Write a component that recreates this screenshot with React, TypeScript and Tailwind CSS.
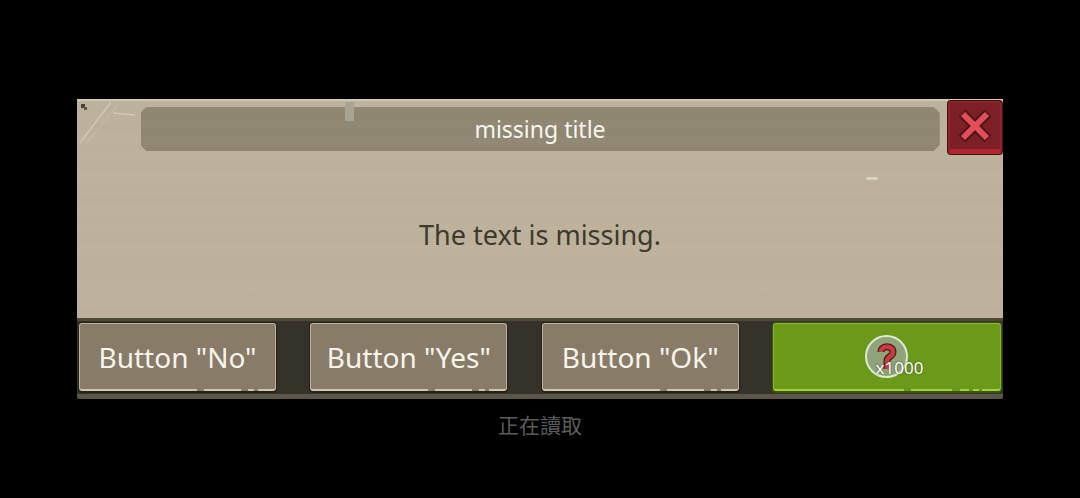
import React from 'react';

const font = { fontFamily: '"Noto Sans", "Noto Sans CJK TC", sans-serif' };

// little breaks in the bottom highlight of the buttons
function Gaps({ items, color }: { items: [number, number][]; color: string }) {
    return (
        <>
            {items.map(([left, width]) => (
                <i
                    key={left}
                    className="absolute bottom-[2px] h-[2px]"
                    style={{ left, width, backgroundColor: color }}
                />
            ))}
        </>
    );
}

function GameButton({ label }: { label: string }) {
    return (
        <button className="relative h-[71px] w-[199px] rounded-[4px] bg-[#26221a] pb-[2px] pt-px px-px">
            <span className="flex h-full w-full items-center justify-center rounded-[3px] border border-[#bdb29c] border-b-2 border-b-[#cfc4ae] bg-[#887c68] text-[28px] text-[#f7f4ec]">
                {label}
            </span>
            <Gaps items={[[119, 7], [163, 7], [176, 4]]} color="#887c68" />
        </button>
    );
}

function CostButton() {
    return (
        <button className="relative h-[71px] w-[230px] rounded-[4px] bg-[#3c5510] pb-[2px] pt-px px-px">
            <span className="flex h-full w-full items-center justify-center rounded-[3px] border border-[#86b52c] border-b-2 border-b-[#a4d03c] bg-[#6b9a1b]">
                <span className="relative flex h-[43px] w-[43px] items-center justify-center rounded-full border-2 border-[#dfe9cf] bg-[#8fa47a]">
                    <svg width="20" height="28" viewBox="0 0 20 28">
                        <path
                            d="M4 9 C4 2 16 2 16 9 C16 14 10 13 10 18 L10 26"
                            fill="none"
                            stroke="#4a1c1c"
                            strokeWidth="7"
                        />
                        <path
                            d="M4 9 C4 2 16 2 16 9 C16 14 10 13 10 18 L10 26"
                            fill="none"
                            stroke="#cf3a3f"
                            strokeWidth="4.5"
                        />
                    </svg>
                    <span className="absolute left-[8px] top-[19px] text-[17px] leading-[24px] text-white [text-shadow:0_0_2px_#2f3a1c]">
                        x1000
                    </span>
                </span>
            </span>
            <Gaps items={[[132, 7], [180, 8], [197, 4], [207, 3]]} color="#6b9a1b" />
        </button>
    );
}

export default function App() {
    return (
        <div className="flex h-[498px] w-[1080px] flex-col items-center bg-black pt-[99px]" style={font}>
            <div className="relative w-[926px]">
                <div className="flex h-[219px] flex-col items-center border-t-2 border-[#cfc6b4] bg-[#bfb29c] bg-[repeating-linear-gradient(180deg,#c0b39d_0px,#beb19b_9px,#bfb29c_17px,#bdb09a_26px,#c0b39d_37px)]">
                    <div className="mt-[6px] flex h-[44px] w-[799px] items-center justify-center bg-[#8f8772] bg-[repeating-linear-gradient(180deg,#918974_0px,#8e8671_9px,#918974_17px)] text-[23px] text-[#f8f6f0] [clip-path:polygon(6px_0,calc(100%-6px)_0,100%_6px,100%_calc(100%-6px),calc(100%-6px)_100%,6px_100%,0_calc(100%-6px),0_6px)]">
                        missing title
                    </div>
                    <p className="mt-[66px] text-[27px] leading-[36px] text-[#3b3930]">The text is missing.</p>
                </div>

                <div className="flex h-[81px] items-start justify-between rounded-b-[2px] border-t-[3px] border-b-[5px] border-t-[#4e4838] border-b-[#5c5648] bg-[#35322a] px-px pt-px">
                    <GameButton label='Button "No"' />
                    <GameButton label='Button "Yes"' />
                    <GameButton label='Button "Ok"' />
                    <CostButton />
                </div>

                {/* wear marks on the parchment */}
                <svg className="absolute left-0 top-0" width="60" height="50" viewBox="0 0 60 50">
                    <path d="M3 44 L34 3" stroke="#d0c8b8" strokeWidth="1.5" fill="none" />
                    <path d="M8 46 L42 4" stroke="#c8bfad" strokeWidth="1" fill="none" />
                    <path d="M36 14 L58 16" stroke="#d0c8b8" strokeWidth="1.5" fill="none" />
                    <rect x="4" y="5" width="4" height="4" fill="#4a4538" />
                    <rect x="7" y="8" width="3" height="3" fill="#5c5648" />
                </svg>
                <i className="absolute left-[268px] top-[3px] h-[19px] w-[9px] bg-[#a9a391]" />
                <i className="absolute left-[789px] top-[78px] h-[3px] w-[12px] rounded-full bg-[#d9d3c5]" />

                <div className="absolute right-0 top-[1px] h-[55px] w-[56px] rounded-[4px] bg-[#3a1512] p-px">
                    <div className="flex h-full w-full items-center justify-center rounded-[3px] border-2 border-b-[5px] border-[#8f232a] border-b-[#b0252e] bg-[#7c2026]">
                        <svg width="34" height="36" viewBox="0 0 34 36">
                            <path d="M4 5 L30 31 M30 5 L4 31" stroke="#4e1818" strokeWidth="10" />
                            <path d="M5 6 L29 30 M29 6 L5 30" stroke="#e44e58" strokeWidth="6" />
                        </svg>
                    </div>
                </div>
            </div>

            <p className="mt-[12px] text-[21px] leading-[28px] text-[#5b5b5b]">正在讀取</p>
        </div>
    );
}
